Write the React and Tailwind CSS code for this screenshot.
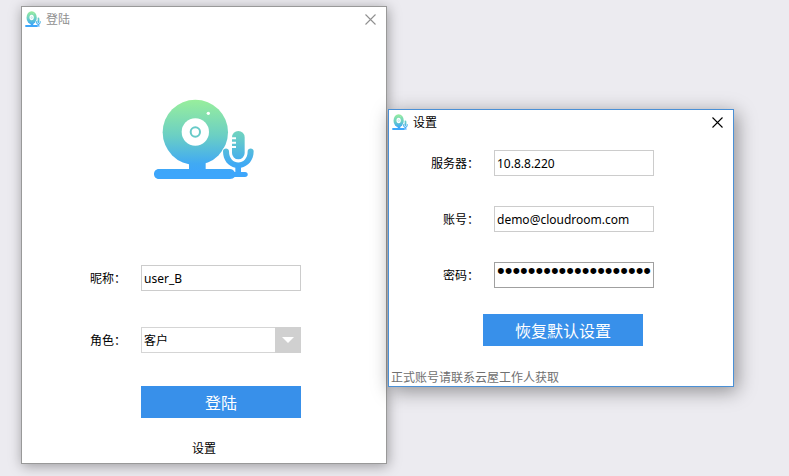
import { useId, useState } from "react";
import { clsx } from "clsx";

function CameraLogo({ className }) {
  const gradient = useId();
  return (
    <svg viewBox="39 42 306 240" preserveAspectRatio="none" className={className} aria-hidden="true">
      <defs>
        <linearGradient id={gradient} gradientUnits="userSpaceOnUse" x1="0" y1="42" x2="0" y2="262">
          <stop offset="0" stopColor="#99ef9b" />
          <stop offset="0.5" stopColor="#6bcfc4" />
          <stop offset="0.88" stopColor="#41aaf3" />
          <stop offset="1" stopColor="#3da6fb" />
        </linearGradient>
      </defs>
      <g fill={`url(#${gradient})`}>
        <circle cx="166" cy="142" r="98" />
        <path d="M147 220 H197 V252 H147 Z" />
        <path d="M57 252 H270 C276 252 281 256 284 261 H315 C326 261 326 276 315 276 H284 C281 280 276 282 270 282 H57 C37 282 37 252 57 252 Z" />
      </g>
      <path
        d="M258 200 V204 A37 37 0 0 0 332 204 V200"
        fill="none"
        stroke="#fff"
        strokeWidth="23"
        strokeLinecap="round"
      />
      <g fill={`url(#${gradient})`}>
        <path d="M249 199 C249 188 267 188 267 199 C267 244 323 244 323 199 C323 188 341 188 341 199 C341 226 324 245 303 248 V264 H286 V248 C265 245 249 226 249 199 Z" />
        <path d="M276 157 A19 19 0 0 1 314 157 V204 A19 19 0 0 1 276 204 V189 H288 V183 H276 V176 H288 V170 H276 V163 H288 V157 Z" />
      </g>
      <circle cx="166" cy="141" r="41" fill="#fff" />
      <circle cx="166" cy="141" r="14" fill="none" stroke="#67cac8" strokeWidth="6" />
      <circle cx="205" cy="85" r="5" fill="#fff" />
    </svg>
  );
}

function CloseIcon() {
  return (
    <svg viewBox="0 0 11 11" className="size-[11px]" aria-hidden="true">
      <path d="M0.5 0.5 L10.5 10.5 M10.5 0.5 L0.5 10.5" fill="none" stroke="currentColor" strokeWidth="1.1" />
    </svg>
  );
}

function Window({ title, active, className, children }) {
  return (
    <section
      className={clsx(
        "absolute flex flex-col border bg-white",
        active
          ? "border-[#4a90d6] shadow-[3px_4px_18px_rgba(0,0,0,0.4)]"
          : "border-[#999999] shadow-[1px_2px_12px_rgba(0,0,0,0.35)]",
        className,
      )}
    >
      <header className={clsx("flex h-6 items-center pr-[10px] pl-[3px]", active ? "text-black" : "text-[#909090]")}>
        <CameraLogo className="size-4" />
        <h1 className="ml-[5px] flex-1">{title}</h1>
        <button type="button" aria-label="关闭">
          <CloseIcon />
        </button>
      </header>
      {children}
    </section>
  );
}

const fieldStyle = "h-[26px] w-40 border bg-white px-[2px] outline-none";
const latinText = "text-[12px] font-['Noto_Sans','Noto_Sans_CJK_SC',sans-serif]";

function Row({ label, id, children }) {
  return (
    <div className="flex items-center gap-[15px]">
      <label htmlFor={id} className="w-12 text-right whitespace-nowrap">
        {label}
      </label>
      {children}
    </div>
  );
}

function PrimaryButton({ className, children }) {
  return (
    <button type="button" className={clsx("h-8 w-40 bg-[#3890ea] text-base text-white", className)}>
      {children}
    </button>
  );
}

function LoginWindow() {
  const [name, setName] = useState("user_B");
  return (
    <Window title="登陆" className="top-[6px] left-[21px] w-[366px]">
      <CameraLogo className="mt-[68px] h-20 w-[102px] self-center" />
      <div className="mt-[86px] flex flex-col gap-9 pl-14">
        <Row label="昵称：" id="nickname">
          <input
            id="nickname"
            value={name}
            onChange={(e) => setName(e.target.value)}
            className={clsx(fieldStyle, latinText, "border-[#cccccc]")}
          />
        </Row>
        <Row label="角色：" id="role">
          <div className="relative">
            <select id="role" className={clsx(fieldStyle, "block appearance-none border-[#d5d5d5]")}>
              <option>客户</option>
              <option>坐席</option>
            </select>
            <span className="pointer-events-none absolute inset-y-0 right-0 flex w-[26px] items-center justify-center bg-[#d0d0d0]">
              <svg viewBox="0 0 12 6" className="h-[6px] w-3" aria-hidden="true">
                <path d="M0 0 H12 L6 6 Z" fill="#fff" />
              </svg>
            </span>
          </div>
        </Row>
      </div>
      <PrimaryButton className="mt-[33px] ml-[119px]">登陆</PrimaryButton>
      <button type="button" className="mt-[21px] mb-[6px] self-center">
        设置
      </button>
    </Window>
  );
}

function SettingsWindow() {
  const [server, setServer] = useState("10.8.8.220");
  const [account, setAccount] = useState("demo@cloudroom.com");
  const [password, setPassword] = useState("00000000000000000000");
  return (
    <Window title="设置" active className="top-[109px] left-[388px] w-[346px]">
      <div className="mt-4 flex flex-col gap-[30px] pl-[42px]">
        <Row label="服务器：" id="server">
          <input
            id="server"
            value={server}
            onChange={(e) => setServer(e.target.value)}
            className={clsx(fieldStyle, latinText, "border-[#cccccc]")}
          />
        </Row>
        <Row label="账号：" id="account">
          <input
            id="account"
            value={account}
            onChange={(e) => setAccount(e.target.value)}
            className={clsx(fieldStyle, latinText, "border-[#cccccc]")}
          />
        </Row>
        <Row label="密码：" id="password">
          <input
            id="password"
            type="password"
            value={password}
            onChange={(e) => setPassword(e.target.value)}
            className={clsx(fieldStyle, "border-[#a0a0a0] pb-2 font-['Liberation_Sans',sans-serif] text-[22px]")}
          />
        </Row>
      </div>
      <PrimaryButton className="mt-[26px] ml-[94px]">恢复默认设置</PrimaryButton>
      <p className="mt-[22px] ml-[2px] text-[#707070]">正式账号请联系云屋工作人获取</p>
    </Window>
  );
}

export default function App() {
  return (
    <main className="relative min-h-screen overflow-hidden bg-[#ecebf0] font-['Noto_Sans_CJK_SC',sans-serif] text-[12px] leading-[18px] text-black">
      <LoginWindow />
      <SettingsWindow />
    </main>
  );
}
